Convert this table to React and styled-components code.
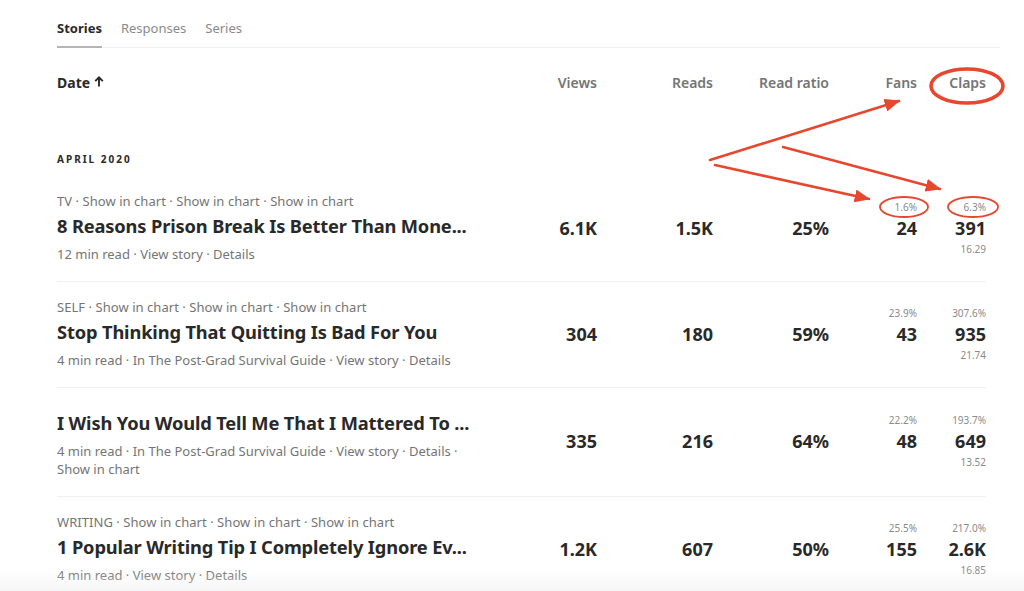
import React from 'react'
import styled, { createGlobalStyle } from 'styled-components'

const GlobalStyle = createGlobalStyle`
  body {
    margin: 0;
    background: #fff;
    font-family: "Noto Sans", "Open Sans", sans-serif;
    color: #292929;
    -webkit-font-smoothing: antialiased;
  }
`

const stories = [
  {
    tag: 'TV',
    top: ['Show in chart', 'Show in chart', 'Show in chart'],
    title: '8 Reasons Prison Break Is Better Than Mone...',
    bottom: ['12 min read', 'View story', 'Details'],
    views: '6.1K',
    reads: '1.5K',
    ratio: '25%',
    fans: '24',
    fansPct: '1.6%',
    claps: '391',
    clapsPct: '6.3%',
    clapsSub: '16.29',
  },
  {
    tag: 'SELF',
    top: ['Show in chart', 'Show in chart', 'Show in chart'],
    title: 'Stop Thinking That Quitting Is Bad For You',
    bottom: ['4 min read', 'In The Post-Grad Survival Guide', 'View story', 'Details'],
    views: '304',
    reads: '180',
    ratio: '59%',
    fans: '43',
    fansPct: '23.9%',
    claps: '935',
    clapsPct: '307.6%',
    clapsSub: '21.74',
  },
  {
    title: 'I Wish You Would Tell Me That I Mattered To ...',
    bottom: ['4 min read', 'In The Post-Grad Survival Guide', 'View story', 'Details', 'Show in chart'],
    views: '335',
    reads: '216',
    ratio: '64%',
    fans: '48',
    fansPct: '22.2%',
    claps: '649',
    clapsPct: '193.7%',
    clapsSub: '13.52',
  },
  {
    tag: 'WRITING',
    top: ['Show in chart', 'Show in chart', 'Show in chart'],
    title: '1 Popular Writing Tip I Completely Ignore Ev...',
    bottom: ['4 min read', 'View story', 'Details'],
    views: '1.2K',
    reads: '607',
    ratio: '50%',
    fans: '155',
    fansPct: '25.5%',
    claps: '2.6K',
    clapsPct: '217.0%',
    clapsSub: '16.85',
  },
]

const joinMeta = parts => parts.join('\u00a0\u00b7 ')

const Annotations = () => (
  <Overlay width="1024" height="591" viewBox="0 0 1024 591">
    <defs>
      <marker id="head" markerWidth="6" markerHeight="5" refX="5.5" refY="2.5" orient="auto" markerUnits="strokeWidth">
        <path d="M0 0 L6 2.5 L0 5 Z" fill="#e8472f" />
      </marker>
    </defs>
    <g stroke="#e8472f" strokeWidth="2.6" fill="none" strokeLinecap="round">
      <ellipse cx="967" cy="86" rx="36" ry="17" strokeWidth="3.6" />
      <ellipse cx="904" cy="207" rx="24" ry="10" strokeWidth="1.8" />
      <ellipse cx="973" cy="207" rx="25" ry="10" strokeWidth="1.8" />
      <line x1="710" y1="160" x2="899" y2="101" markerEnd="url(#head)" />
      <line x1="715" y1="165" x2="869" y2="199" markerEnd="url(#head)" />
      <line x1="783" y1="147" x2="940" y2="189" markerEnd="url(#head)" />
    </g>
  </Overlay>
)

const SortArrow = () => (
  <ArrowIcon width="10" height="11" viewBox="0 0 10 11">
    <path d="M5 10.5V1.5M1.2 5.2L5 1.4l3.8 3.8" stroke="#292929" strokeWidth="1.9" fill="none" />
  </ArrowIcon>
)

const StatStack = ({ pct, value, sub }) => (
  <Stack>
    <Small>{pct}</Small>
    <Value>{value}</Value>
    <Small>{sub || '\u00a0'}</Small>
  </Stack>
)

const App = () => (
  <Page>
    <GlobalStyle />
    <TabBar>
      <Tab active>Stories</Tab>
      <Tab>Responses</Tab>
      <Tab>Series</Tab>
    </TabBar>

    <HeaderRow>
      <DateHead>
        Date <SortArrow />
      </DateHead>
      <ColHead>Views</ColHead>
      <ColHead>Reads</ColHead>
      <ColHead>Read ratio</ColHead>
      <ColHead>Fans</ColHead>
      <ColHead>Claps</ColHead>
    </HeaderRow>

    <Month>April 2020</Month>

    {stories.map((s, i) => (
      <Row key={i} last={i === stories.length - 1}>
        <StoryInfo>
          {s.tag && <Meta>{joinMeta([s.tag, ...s.top])}</Meta>}
          <Title hasTag={!!s.tag}>{s.title}</Title>
          <BottomMeta>{joinMeta(s.bottom)}</BottomMeta>
        </StoryInfo>
        <Value>{s.views}</Value>
        <Value>{s.reads}</Value>
        <Value>{s.ratio}</Value>
        <StatStack pct={s.fansPct} value={s.fans} />
        <StatStack pct={s.clapsPct} value={s.claps} sub={s.clapsSub} />
      </Row>
    ))}

    <Annotations />
    <BottomFade />
  </Page>
)

const Page = styled.div`
  position: relative;
  width: 1024px;
  height: 591px;
  overflow: hidden;
  padding-left: 57px;
  box-sizing: border-box;
`
const TabBar = styled.div`
  display: flex;
  gap: 19px;
  width: 943px;
  border-bottom: 1px solid #f0f0f0;
`
const Tab = styled.div`
  padding: 19px 0 9px;
  font-size: 13px;
  line-height: 18px;
  font-weight: ${p => (p.active ? 700 : 400)};
  color: ${p => (p.active ? '#292929' : '#8a8a8a')};
  border-bottom: 2px solid ${p => (p.active ? '#b5b5b5' : 'transparent')};
  margin-bottom: -1px;
`
const HeaderRow = styled.div`
  display: grid;
  grid-template-columns: 1fr 116px 116px 116px 88px 69px;
  width: 929px;
  padding-top: 25px;
  font-size: 14px;
  line-height: 20px;
`
const DateHead = styled.div`
  display: flex;
  align-items: center;
  gap: 4px;
  font-weight: 700;
  color: #292929;
`
const ArrowIcon = styled.svg`
  display: block;
  margin-top: -3px;
`
const ColHead = styled.div`
  text-align: right;
  font-weight: 600;
  color: #757575;
`
const Month = styled.div`
  margin-top: 59px;
  margin-bottom: 10px;
  font-size: 10px;
  line-height: 14px;
  font-weight: 700;
  letter-spacing: 2px;
  text-transform: uppercase;
  color: #292929;
`
const Row = styled.div`
  display: grid;
  grid-template-columns: 1fr 116px 116px 116px 88px 69px;
  align-items: center;
  width: 929px;
  padding: 16px 0 18px;
  border-bottom: ${p => (p.last ? 'none' : '1px solid #f0f0f0')};
`
const StoryInfo = styled.div`
  min-width: 0;
`
const Meta = styled.div`
  font-size: 13px;
  line-height: 18px;
  color: #757575;
  white-space: nowrap;
  letter-spacing: 0.05px;
`
const BottomMeta = styled.div`
  margin-top: 6px;
  max-width: 412px;
  font-size: 13px;
  line-height: 18px;
  color: #757575;
`
const Title = styled.div`
  margin-top: ${p => (p.hasTag ? '3px' : '6px')};
  font-size: 18.3px;
  line-height: 26px;
  font-weight: 700;
  letter-spacing: -0.15px;
  color: #292929;
  white-space: nowrap;
`
const Value = styled.div`
  text-align: right;
  font-size: 18px;
  line-height: 24px;
  font-weight: 700;
  color: #292929;
`
const Stack = styled.div`
  display: flex;
  flex-direction: column;
  align-items: flex-end;
  gap: 2px;
`
const Small = styled.div`
  font-size: 10px;
  line-height: 14px;
  color: #8a8a8a;
`
const Overlay = styled.svg`
  position: absolute;
  top: 0;
  left: 0;
  pointer-events: none;
`
const BottomFade = styled.div`
  position: absolute;
  left: 0;
  right: 0;
  bottom: 0;
  height: 22px;
  background: linear-gradient(to bottom, rgba(255, 255, 255, 0), rgba(238, 238, 238, 0.55));
  pointer-events: none;
`

export default App
